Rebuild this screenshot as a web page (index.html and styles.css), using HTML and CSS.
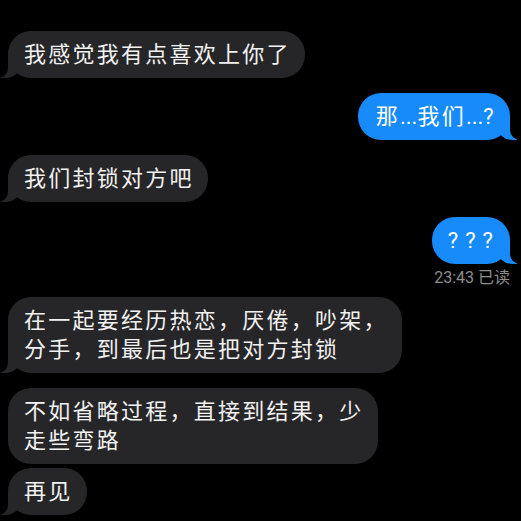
FILE: index.html
```html
<!DOCTYPE html>
<html lang="zh-CN">
<head>
    <meta charset="UTF-8">
    <meta name="viewport" content="width=device-width, initial-scale=1.0">
    <title>信息</title>
    <link rel="stylesheet" href="styles.css">
</head>
<body>
    <div class="chat">
        <div class="bubble them tail">我感觉我有点喜欢上你了</div>
        <div class="bubble me tail">那<span class="dots">...</span>我们<span class="dots">...</span>?</div>
        <div class="bubble them tail">我们封锁对方吧</div>

        <div class="group">
            <div class="bubble me tail qs">???</div>
            <div class="receipt">23:43 已读</div>
        </div>

        <div class="bubble them tail">在一起要经历热恋，厌倦，吵架，<br>分手，到最后也是把对方封锁</div>

        <div class="group">
            <div class="bubble them">不如省略过程，直接到结果，少<br>走些弯路</div>
            <div class="bubble them tail">再见</div>
        </div>
    </div>
</body>
</html>
```

FILE: styles.css
```css
/* dark chat screen */
body {
    margin: 0;
    background-color: #000;
    font-family: Roboto, "Noto Sans CJK SC", sans-serif;
    color: #f2f2f2;
}
.chat {
    display: flex;
    flex-direction: column;
    gap: 15px;
    padding: 31px 11px 0 8px;
}
.group {
    display: flex;
    flex-direction: column;
    gap: 4px;
}
.bubble {
    position: relative;
    width: fit-content;
    padding: 9px 14px 9px 16px;
    font-size: 22px;
    line-height: 29px;
    letter-spacing: 2.25px;
    border-radius: 23px;
}
.them {
    background-color: #262628;
    align-self: flex-start;
}
.me {
    background-color: #178bfa;
    color: #fff;
    align-self: flex-end;
    padding-left: 18px;
}
.dots {
    letter-spacing: 0;
}
.qs {
    letter-spacing: 7px;
    padding: 9px 10px 9px 16px;
}

/* bubble tails */
.tail::before,
.tail::after {
    content: "";
    position: absolute;
    bottom: 0;
    height: 24px;
}
.them.tail::before {
    left: -7px;
    width: 20px;
    background-color: #262628;
    border-bottom-right-radius: 16px 14px;
}
.them.tail::after {
    left: -26px;
    width: 26px;
    background-color: #000;
    border-bottom-right-radius: 10px;
}
.me.tail::before {
    right: -7px;
    width: 20px;
    background-color: #178bfa;
    border-bottom-left-radius: 16px 14px;
}
.me.tail::after {
    right: -26px;
    width: 26px;
    background-color: #000;
    border-bottom-left-radius: 10px;
}

.receipt {
    align-self: flex-end;
    font-size: 16px;
    line-height: 20px;
    color: #8e8e8e;
    margin-bottom: -6px;
}
```
